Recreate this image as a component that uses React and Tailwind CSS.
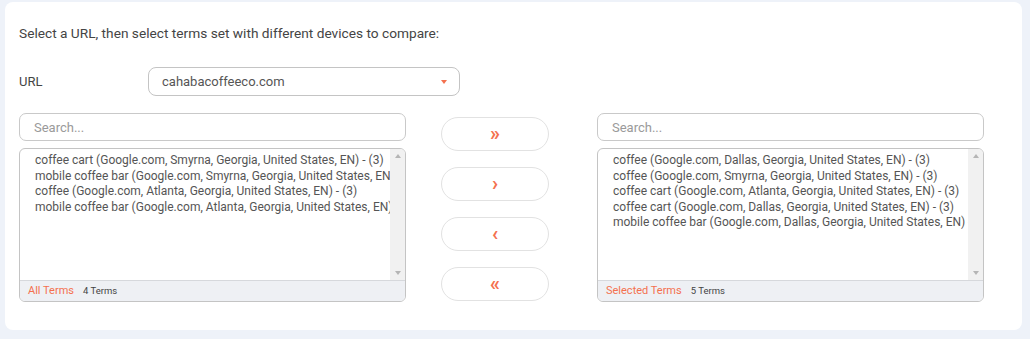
import React from "react";

const leftTerms = [
  "coffee cart (Google.com, Smyrna, Georgia, United States, EN) - (3)",
  "mobile coffee bar (Google.com, Smyrna, Georgia, United States, EN) - (3)",
  "coffee (Google.com, Atlanta, Georgia, United States, EN) - (3)",
  "mobile coffee bar (Google.com, Atlanta, Georgia, United States, EN) - (3)",
];

const rightTerms = [
  "coffee (Google.com, Dallas, Georgia, United States, EN) - (3)",
  "coffee (Google.com, Smyrna, Georgia, United States, EN) - (3)",
  "coffee cart (Google.com, Atlanta, Georgia, United States, EN) - (3)",
  "coffee cart (Google.com, Dallas, Georgia, United States, EN) - (3)",
  "mobile coffee bar (Google.com, Dallas, Georgia, United States, EN) - (3)",
];

const TermList = ({ terms, label, textPad }) => {
  return (
    <div className="w-[387px]">
      <input
        placeholder="Search..."
        className="w-full h-[28px] border border-[#c9c9c9] rounded-[7px] px-[14px] text-[13px] text-[#555] placeholder:text-[#9a9a9a] outline-none"
      />
      <div className="mt-[7px] h-[154px] border border-[#c4c4c4] rounded-[6px] overflow-hidden flex flex-col">
        <div className="flex flex-1 min-h-0">
          <div className={`flex-1 min-w-0 overflow-hidden pt-[4px] ${textPad}`}>
            {terms.map((t, i) => (
              <div
                key={i}
                className="whitespace-nowrap text-[12px] leading-[15.6px] text-[#555]"
              >
                {t}
              </div>
            ))}
          </div>
          <div className="w-[15px] bg-[#f1f1f1] flex flex-col items-center justify-between py-[5px]">
            <div className="w-0 h-0 border-l-[3px] border-r-[3px] border-b-[4px] border-l-transparent border-r-transparent border-b-[#b5b5b5]" />
            <div className="w-0 h-0 border-l-[3px] border-r-[3px] border-t-[4px] border-l-transparent border-r-transparent border-t-[#b5b5b5]" />
          </div>
        </div>
        <div className="h-[21px] bg-[#eef0f4] border-t border-[#d6d8dc] flex items-center pl-[8px] gap-[9px]">
          <span className="text-[11px] text-[#f4714f]">{label}</span>
          <span className="text-[9.5px] text-[#444]">{terms.length} Terms</span>
        </div>
      </div>
    </div>
  );
};

const MoveButton = ({ glyph }) => (
  <button className="w-[108px] h-[34px] rounded-full border border-[#e2e2e2] bg-white flex items-center justify-center text-[#f4714f] text-[20px] leading-none font-bold pb-[2px]">
    {glyph}
  </button>
);

export default function App() {
  return (
    <div
      className="w-[1030px] h-[339px] bg-[#eef2f9] pl-[5px] pr-[8px] pt-[2px]"
      style={{ fontFamily: "Roboto, 'Liberation Sans', sans-serif" }}
    >
      <div className="h-[328px] bg-white rounded-[8px] pl-[14px] pt-[22px]">
        <p className="text-[13.7px] text-[#444] leading-[18px]">
          Select a URL, then select terms set with different devices to compare:
        </p>
        <div className="flex items-center mt-[25px]">
          <span className="w-[129px] text-[13px] text-[#444]">URL</span>
          <div className="w-[312px] h-[29px] border border-[#c4c4c4] rounded-[8px] flex items-center justify-between pl-[13px] pr-[12px]">
            <span className="text-[13px] text-[#555]">cahabacoffeeco.com</span>
            <div className="w-0 h-0 border-l-[3px] border-r-[3px] border-t-[4px] border-l-transparent border-r-transparent border-t-[#f4714f]" />
          </div>
        </div>
        <div className="flex mt-[17px]">
          <TermList terms={leftTerms} label="All Terms" textPad="pl-[15px]" />
          <div className="ml-[35px] mr-[48px] pt-[4px] flex flex-col gap-[16px]">
            <MoveButton glyph="»" />
            <MoveButton glyph="›" />
            <MoveButton glyph="‹" />
            <MoveButton glyph="«" />
          </div>
          <TermList terms={rightTerms} label="Selected Terms" textPad="pl-[15px]" />
        </div>
      </div>
    </div>
  );
}
